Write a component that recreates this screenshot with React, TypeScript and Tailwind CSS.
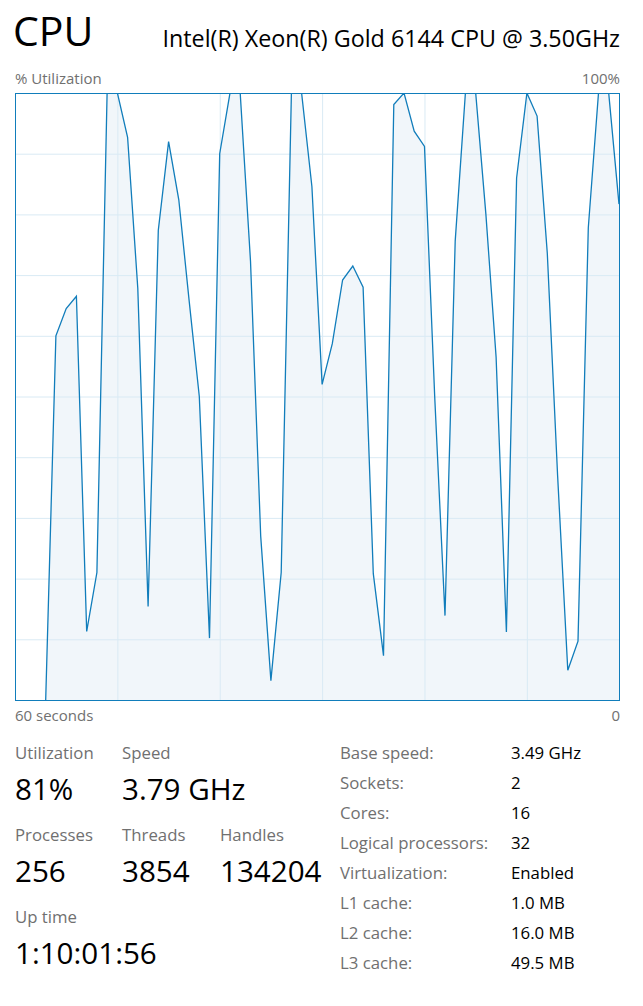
import React from 'react';

// cpu usage samples, one per second (first three are empty)
const samples: (number | null)[] = [
  null, null, null, 0, 60, 64.5, 66.5, 11.3, 21, 100,
  100, 92.7, 67.8, 15.4, 77.4, 92, 82.4, 66, 50, 10.2,
  90, 100, 100, 72.3, 27, 3.2, 21, 100, 100, 84.6,
  52, 58.7, 69.2, 71.5, 68, 20.8, 7.3, 98.1, 100, 93.7,
  91.2, 50, 13.9, 75.6, 100, 100, 80, 56.5, 11.2, 86,
  100, 96.2, 73.6, 37, 4.9, 9.7, 77.8, 100, 100, 81.7,
];

const W = 603;
const H = 606;
const STEP = 10.237;

function UsageGraph() {
  const xOf = (i: number) => i * STEP - 1;
  const yOf = (v: number) => (100 - v) * 6.07 - 1;
  const pts = samples
    .map((v, i) => (v === null ? null : `${xOf(i).toFixed(1)},${yOf(v).toFixed(1)}`))
    .filter(Boolean) as string[];
  const firstIdx = samples.findIndex((v) => v !== null);
  const area = `${xOf(firstIdx).toFixed(1)},${H} ${pts.join(' ')} ${xOf(59).toFixed(1)},${H}`;

  return (
    <div className="w-[605px] h-[608px] border border-[#117dbb] bg-white">
      <svg width={W} height={H} className="block overflow-hidden">
        <polygon points={area} fill="#f1f6fa" />
        {Array.from({ length: 9 }).map((_, k) => (
          <line key={'h' + k} x1={0} x2={W} y1={(k + 1) * 60.7 - 0.5} y2={(k + 1) * 60.7 - 0.5} stroke="#d9eaf4" strokeWidth={1} />
        ))}
        {Array.from({ length: 5 }).map((_, k) => (
          <line key={'v' + k} y1={0} y2={H} x1={(k + 1) * 102.37 - 0.5} x2={(k + 1) * 102.37 - 0.5} stroke="#d9eaf4" strokeWidth={1} />
        ))}
        <polyline points={pts.join(' ')} fill="none" stroke="#117dbb" strokeWidth={1.3} strokeLinejoin="miter" />
      </svg>
    </div>
  );
}

function Stat({ label, value, className = '' }: { label: string; value: string; className?: string }) {
  return (
    <div className={className}>
      <div className="text-[16.8px] leading-[24px] text-[#707070]">{label}</div>
      <div className="text-[29.6px] leading-[47px] text-black">{value}</div>
    </div>
  );
}

const details = [
  ['Base speed:', '3.49 GHz'],
  ['Sockets:', '2'],
  ['Cores:', '16'],
  ['Logical processors:', '32'],
  ['Virtualization:', 'Enabled'],
  ['L1 cache:', '1.0 MB'],
  ['L2 cache:', '16.0 MB'],
  ['L3 cache:', '49.5 MB'],
];

export default function App() {
  return (
    <div
      className="w-[643px] h-[1006px] bg-white overflow-hidden px-[15px]"
      style={{ fontFamily: '"Segoe UI", "Open Sans", sans-serif' }}
    >
      <div className="flex justify-between items-end pt-[5px] w-[605px]">
        <div className="text-[41px] leading-[50px] text-black -ml-[2px]">CPU</div>
        <div className="text-[23.3px] leading-[30px] text-black mb-[2px]">Intel(R) Xeon(R) Gold 6144 CPU @ 3.50GHz</div>
      </div>

      <div className="flex justify-between w-[605px] mt-[12.5px] text-[15px] leading-[20px] text-[#707070]">
        <span>% Utilization</span>
        <span>100%</span>
      </div>

      <div className="mt-[5.5px]">
        <UsageGraph />
      </div>

      <div className="flex justify-between w-[605px] mt-[4px] text-[15px] leading-[20px] text-[#707070]">
        <span>60 seconds</span>
        <span>0</span>
      </div>

      <div className="flex mt-[13px]">
        <div className="w-[325px] pt-[3px] flex flex-col gap-[11px]">
          <div className="flex">
            <Stat label="Utilization" value="81%" className="w-[107px]" />
            <Stat label="Speed" value="3.79 GHz" />
          </div>
          <div className="flex">
            <Stat label="Processes" value="256" className="w-[107px]" />
            <Stat label="Threads" value="3854" className="w-[98px]" />
            <Stat label="Handles" value="134204" />
          </div>
          <Stat label="Up time" value="1:10:01:56" />
        </div>

        <div className="grid grid-cols-[171px_auto] text-[16.8px] leading-[30px]">
          {details.map(([k, v]) => (
            <React.Fragment key={k}>
              <div className="text-[#707070]">{k}</div>
              <div className="text-black">{v}</div>
            </React.Fragment>
          ))}
        </div>
      </div>
    </div>
  );
}
